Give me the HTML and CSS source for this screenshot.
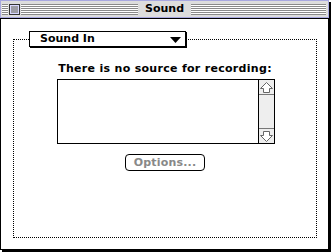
FILE: index.html
```html
<!DOCTYPE html>
<html>
<head>
<meta charset="utf-8">
<link rel="stylesheet" href="styles.css">
</head>
<body>
<div class="window">
  <div class="titlebar">
    <span class="stripes s1"></span>
    <span class="closebox"></span>
    <span class="stripes s2"></span>
    <span class="title">Sound</span>
    <span class="stripes s3"></span>
  </div>
  <div class="content">
    <div class="group">
      <div class="popup">
        <span class="popup-label">Sound In</span>
        <svg class="popup-arrow" width="11" height="6" viewBox="0 0 11 6"><polygon points="0,0 11,0 5.5,6" fill="#000"/></svg>
      </div>
      <div class="heading">There is no source for recording:</div>
      <div class="listbox">
        <div class="list"></div>
        <div class="scrollbar">
          <div class="arrow up">
            <svg width="13" height="11" viewBox="0 0 13 11"><path d="M6.5 0.5 L12.5 6.5 L9.5 6.5 L9.5 10.5 L3.5 10.5 L3.5 6.5 L0.5 6.5 Z" fill="#fff" stroke="#666" stroke-width="1"/></svg>
          </div>
          <div class="track"></div>
          <div class="arrow down">
            <svg width="13" height="11" viewBox="0 0 13 11"><path d="M6.5 10.5 L12.5 4.5 L9.5 4.5 L9.5 0.5 L3.5 0.5 L3.5 4.5 L0.5 4.5 Z" fill="#fff" stroke="#666" stroke-width="1"/></svg>
          </div>
        </div>
      </div>
      <button class="btn">Options...</button>
    </div>
  </div>
</div>
</body>
</html>
```

FILE: styles.css
```css
html, body {
  margin: 0;
  padding: 0;
  background: #fff;
}
body {
  width: 331px;
  height: 252px;
  overflow: hidden;
  font-family: "DejaVu Sans", "Liberation Sans", sans-serif;
  font-weight: bold;
  font-size: 11px;
}
.window {
  width: 329px;
  height: 250px;
  box-shadow: 2px 2px 0 #000;
}
.titlebar {
  box-sizing: border-box;
  width: 329px;
  height: 18px;
  border: 1px solid #a8a8e0;
  background: #dddddd;
  display: flex;
  align-items: flex-start;
}
.stripes {
  display: block;
  height: 11px;
  margin-top: 3px;
  background: repeating-linear-gradient(to bottom, #8a8a8a 0, #8a8a8a 1px, #ffffff 1px, #ffffff 2px);
}
.s1 { width: 6px; margin-left: 1px; }
.s2 { width: 117px; margin-left: 1px; }
.s3 { width: 135px; }
.closebox {
  display: block;
  box-sizing: border-box;
  width: 11px;
  height: 11px;
  margin-top: 3px;
  margin-left: 1px;
  border: 1px solid #333;
  background: #9c9ca4;
  box-shadow: inset 1px 1px 0 #d8d8ff, inset -1px -1px 0 #d8d8ff;
}
.title {
  display: block;
  width: 53px;
  text-align: center;
  font-size: 11px;
  line-height: 16px;
  color: #000;
}
.content {
  box-sizing: border-box;
  height: 232px;
  border: 1px solid #000;
  background: #fff;
  padding: 20px 0 0 12px;
}
.group {
  box-sizing: border-box;
  position: relative;
  width: 304px;
  height: 199px;
  border: 1px dotted #000;
  padding-top: 22px;
  display: flex;
  flex-direction: column;
  align-items: center;
}
.popup {
  position: absolute;
  left: 15px;
  top: -9px;
  box-sizing: border-box;
  width: 157px;
  height: 16px;
  border: 1px solid #000;
  background: #fff;
  box-shadow: 1px 1px 0 #000;
  display: flex;
  align-items: center;
  justify-content: space-between;
  padding: 0 4px 0 10px;
}
.popup-label {
  line-height: 14px;
}
.popup-arrow {
  display: block;
  margin-top: 1px;
}
.heading {
  line-height: 13px;
  letter-spacing: 0.3px;
  color: #000;
}
.listbox {
  box-sizing: border-box;
  margin-top: 4px;
  margin-left: 2px;
  width: 218px;
  height: 65px;
  border: 1px solid #000;
  display: flex;
}
.list {
  flex: 1;
  background: #fff;
}
.scrollbar {
  box-sizing: border-box;
  width: 16px;
  border-left: 1px solid #000;
  background: #eeeeee;
  display: flex;
  flex-direction: column;
}
.arrow {
  box-sizing: border-box;
  height: 15px;
  display: flex;
  align-items: center;
  justify-content: center;
  background: #eeeeee;
}
.arrow svg { display: block; }
.arrow.up { border-bottom: 1px solid #777; }
.arrow.down { border-top: 1px solid #777; }
.track { flex: 1; }
.btn {
  box-sizing: border-box;
  margin-top: 10px;
  width: 80px;
  height: 17px;
  padding: 0;
  border: 1px solid #000;
  border-radius: 4px;
  background: #fff;
  color: #888;
  font-family: "DejaVu Sans", "Liberation Sans", sans-serif;
  font-weight: bold;
  font-size: 11px;
  line-height: 15px;
  letter-spacing: 0.2px;
}
```
